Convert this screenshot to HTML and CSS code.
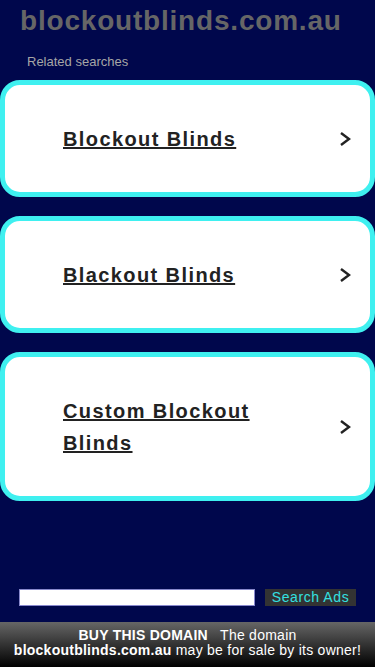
FILE: index.html
```html
<!DOCTYPE html>
<html>
<head>
	<title>blockoutblinds.com.au</title>
	<meta name="viewport" content="width=device-width, initial-scale=1">
	<link rel="stylesheet" href="styles.css">
</head>
<body>
   <div class="page">
      <div class="domain">blockoutblinds.com.au</div>
      <div class="related">Related searches</div>
      <div class="list">
         <a class="card" href="#">
            <span class="label">Blockout Blinds</span>
            <svg class="arrow" viewBox="0 0 14 16"><path d="M3 2 L11 8 L3 14" /></svg>
         </a>
         <a class="card" href="#">
            <span class="label">Blackout Blinds</span>
            <svg class="arrow" viewBox="0 0 14 16"><path d="M3 2 L11 8 L3 14" /></svg>
         </a>
         <a class="card tall" href="#">
            <span class="label">Custom Blockout Blinds</span>
            <svg class="arrow" viewBox="0 0 14 16"><path d="M3 2 L11 8 L3 14" /></svg>
         </a>
      </div>
      <div class="search">
         <input class="box" type="text">
         <button class="btn">Search Ads</button>
      </div>
   </div>
   <div class="footer">
      <b>BUY THIS DOMAIN</b>&nbsp;&nbsp; The domain<br>
      <b>blockoutblinds.com.au</b> may be for sale by its owner!
   </div>
</body>
</html>
```

FILE: styles.css
```css
html,body{
	margin: 0;
	padding: 0;
	background: #00074c;
	font-family: "Liberation Sans", Arial, sans-serif;
}
.page{
	height: 622px;
	display: flex;
	flex-direction: column;
}
.domain{
	color: #666;
	font-size: 28px;
	font-weight: bold;
	letter-spacing: 0.8px;
	padding: 5px 0 0 20px;
	height: 34px;
	flex-shrink: 0;
}
.related{
	color: #a6a6a6;
	font-size: 13px;
	padding: 15px 0 0 27px;
	height: 26px;
	flex-shrink: 0;
}
.list{
	display: flex;
	flex-direction: column;
	gap: 19px;
	flex-shrink: 0;
}
.card{
	display: flex;
	align-items: center;
	justify-content: space-between;
	background: #fff;
	border: 5px solid #3ff0f0;
	border-radius: 20px;
	height: 107px;
	flex-shrink: 0;
	padding: 0 18px 0 58px;
	color: #222;
	text-decoration: none;
}
.card.tall{
	height: 139px;
}
.label{
	font-size: 20px;
	font-weight: bold;
	letter-spacing: 1.4px;
	text-decoration: underline;
	line-height: 32px;
	width: 215px;
}
.arrow{
	width: 14px;
	height: 16px;
	fill: none;
	stroke: #222;
	stroke-width: 2.4;
}
.search{
	margin-top: auto;
	display: flex;
	align-items: center;
	padding: 0 0 16px 19px;
}
.box{
	width: 236px;
	height: 17px;
	box-sizing: border-box;
	border: 1px solid #8888cc;
	background: #fff;
	margin: 0;
	padding: 0;
}
.btn{
	margin-left: 10px;
	width: 91px;
	height: 17px;
	padding: 0;
	border: none;
	background: #333;
	color: #33e0e0;
	font-family: "Liberation Sans", Arial, sans-serif;
	font-size: 14px;
	letter-spacing: 0.6px;
	line-height: 17px;
}
.footer{
	height: 45px;
	box-sizing: border-box;
	padding-top: 6px;
	background: linear-gradient(#666, #000);
	color: #fff;
	text-align: center;
	font-size: 14px;
	letter-spacing: 0.25px;
	line-height: 15px;
}
```
